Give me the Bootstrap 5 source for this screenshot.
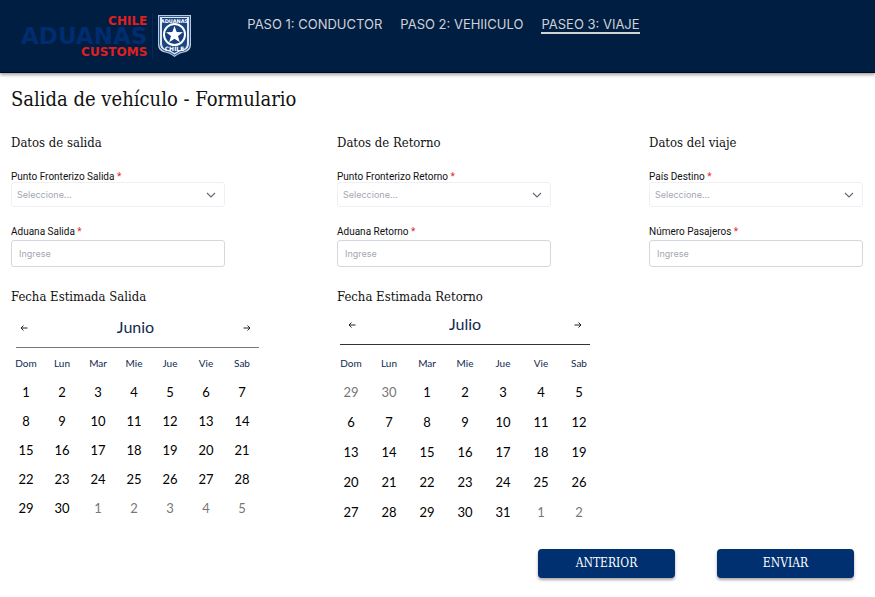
<!DOCTYPE html>
<html lang="es">
<head>
<meta charset="utf-8">
<meta name="viewport" content="width=device-width, initial-scale=1">
<title>Salida de vehículo - Formulario</title>
<link href="https://cdn.jsdelivr.net/npm/bootstrap@5.3.0/dist/css/bootstrap.min.css" rel="stylesheet">
<style>
:root { --navy: #001e42; --brand-blue: #00306f; --brand-red: #e0201f; --slab: "Roboto Slab", "DejaVu Serif Condensed", "DejaVu Serif", serif; }
body { font-family: Inter, sans-serif; color: #111; background: #fff; }
.site-header { background: var(--navy); min-height: 73px; border-bottom: 1px solid #000a1c; box-shadow: 0 2px 3px rgba(0,0,0,.35); padding: 14px 21px 13px; gap: 55px; }
.brand { text-decoration: none; gap: 4px; font-family: "DejaVu Sans", Verdana, sans-serif; font-weight: 700; }
.brand-words { color: var(--brand-red); font-size: 12px; line-height: 14px; padding-right: 5px; border-right: 1px solid #002a63; }
.brand-main { color: #002c70; font-size: 23px; line-height: 17px; }
.steps { gap: 18px; }
.steps .nav-link { color: #d0d2d6; font-size: 13px; line-height: 15px; padding: 3px 0 0; border-bottom: 2px solid transparent; }
.steps .nav-link.active { border-color: #d0d2d6; }
.page-body { padding: 12px 11px 16px; }
.page-title { font-family: var(--slab); font-size: 20px; line-height: 28px; margin: 0 0 20px; }
.form-columns { display: grid; grid-template-columns: 326fr 312fr 215fr; }
.block-title { font-family: var(--slab); font-size: 13px; line-height: 20px; margin: 0 0 18px; }
.field { max-width: 214px; }
.field + .field { margin-top: 19px; }
.field label { display: block; font-family: Roboto, sans-serif; font-size: 10px; line-height: 11px; }
.field + .field label { margin-bottom: 3px; }
.field label span { color: #e02b2b; }
.field .form-select, .field .form-control { font-size: 9px; border-radius: 3px; color: #a3a8b0; }
.field .form-select { height: 25px; padding: 0 28px 0 5px; border-color: #f0f0f2; background-position: right 8px center; background-size: 10px;
  background-image: url("data:image/svg+xml,%3Csvg xmlns='http://www.w3.org/2000/svg' viewBox='0 0 10 10'%3E%3Cpath d='M1 3l4 4 4-4' fill='none' stroke='%23646b7b' stroke-width='1.2'/%3E%3C/svg%3E"); }
.field .form-control { height: 27px; padding: 0 7px; border-color: #d6d7dc; }
.form-control::placeholder { color: #a3a8b0; opacity: 1; }
.dates { font-family: var(--slab); font-size: 13px; line-height: 20px; margin: 20px 0 0; }
.calendar { font-family: Lato, sans-serif; width: 252px; margin-left: -3px; padding-top: 6px; }
.calendar-wide { width: 266px; margin-left: -5px; padding-top: 3px; }
.calendar-head { margin: 0 1px 0 8px; padding: 0 8px 6px 4px; border-bottom: 1px solid #777; }
.calendar-wide .calendar-head { border-color: #333; margin-right: 8px; padding: 0 8px 6px; }
.calendar-head h3 { color: #10294f; font-size: 16px; line-height: 28px; font-weight: 400; margin: 0; }
.calendar-head button { border: 0; background: none; padding: 0; line-height: 8px; }
.calendar table { width: 100%; table-layout: fixed; text-align: center; color: #000; font-size: 13px; }
.calendar td { height: 29px; padding: 0; line-height: 16px; }
.calendar-wide td { height: 30px; }
.calendar th { color: #10294f; height: 29px; padding: 0; font-size: 10px; font-weight: 400; line-height: 12px; }
.calendar-wide th { height: 32px; padding: 4px 0 0; }
.calendar .outside { color: #777; }
.actions { gap: 42px; padding: 22px 10px 0 0; }
.actions .btn { font-family: var(--slab); font-size: 12px; line-height: 17px; color: #fff; background: var(--brand-blue); border: 0; border-radius: 4px; width: 137px; padding: 6px; box-shadow: 0 2px 3px rgba(0,0,0,.35); }
</style>
</head>
<body>
<header class="site-header d-flex align-items-start">
  <a class="brand d-flex align-items-start" href="#">
    <span class="brand-words d-flex flex-column align-items-end"><span>CHILE</span><span class="brand-main">ADUANAS</span><span>CUSTOMS</span></span>
    <svg width="35" height="44" viewBox="0 0 35 44" aria-hidden="true">
      <path d="M1 1h33v30q0 5-5 7-7 1-11.500 5Q13 39 6 38q-5-2-5-7z" fill="#b6c7de"/>
      <path d="M2.500 2.500h30v28q0 4-4.500 6-6 1-10.500 4.500Q13 37.500 7 36.500q-4.500-2-4.500-6z" fill="#dfe8f3" stroke="#2d5790"/>
      <path d="M5 4h25v25q0 4-3 6-6 1-9.500 4Q14 36 8 35q-3-2-3-6z" fill="#1b4684"/>
      <g fill="#fff" font-family="DejaVu Sans, sans-serif" font-weight="700" text-anchor="middle"><text x="17.500" y="9" font-size="5">ADUANAS</text><text x="17.500" y="37" font-size="6">CHILE</text></g>
      <circle cx="17.500" cy="20.500" r="10.500" fill="#153f7a" stroke="#fff" stroke-width="2"/>
      <path d="M17.500 12l2.200 6 6.300.2-5 3.900 1.800 6.100-5.300-3.500-5.300 3.500 1.800-6.100-5-3.900 6.300-.2z" fill="#fff"/>
    </svg>
  </a>
  <nav class="nav steps" aria-label="Pasos">
    <a class="nav-link" href="#">PASO 1: CONDUCTOR</a>
    <a class="nav-link" href="#">PASO 2: VEHIICULO</a>
    <a class="nav-link active" aria-current="step" href="#">PASEO 3: VIAJE</a>
  </nav>
</header>
<main class="page-body">
  <h1 class="page-title">Salida de vehículo - Formulario</h1>
  <form>
    <div class="form-columns">
      <section>
        <h2 class="block-title">Datos de salida</h2>
        <div class="field"><label for="ps">Punto Fronterizo Salida <span>*</span></label><select id="ps" class="form-select"><option>Seleccione...</option></select></div>
        <div class="field"><label for="as">Aduana Salida <span>*</span></label><input id="as" class="form-control" placeholder="Ingrese"></div>
        <h2 class="dates">Fecha Estimada Salida</h2>
        <div class="calendar">
          <div class="calendar-head d-flex justify-content-between align-items-center">
            <button type="button" aria-label="Mes anterior"><svg width="8" height="8" viewBox="0 0 8 8" fill="none" stroke="#222"><path d="M7.500 4H1M3.500 1.500L1 4l2.500 2.500"/></svg></button>
            <h3>Junio</h3>
            <button type="button" aria-label="Mes siguiente"><svg width="8" height="8" viewBox="0 0 8 8" fill="none" stroke="#222"><path d="M.5 4H7M4.500 1.500L7 4 4.500 6.500"/></svg></button>
          </div>
          <table>
            <thead><tr><th>Dom</th><th>Lun</th><th>Mar</th><th>Mie</th><th>Jue</th><th>Vie</th><th>Sab</th></tr></thead>
            <tbody>
              <tr><td>1</td><td>2</td><td>3</td><td>4</td><td>5</td><td>6</td><td>7</td></tr>
              <tr><td>8</td><td>9</td><td>10</td><td>11</td><td>12</td><td>13</td><td>14</td></tr>
              <tr><td>15</td><td>16</td><td>17</td><td>18</td><td>19</td><td>20</td><td>21</td></tr>
              <tr><td>22</td><td>23</td><td>24</td><td>25</td><td>26</td><td>27</td><td>28</td></tr>
              <tr><td>29</td><td>30</td><td class="outside">1</td><td class="outside">2</td><td class="outside">3</td><td class="outside">4</td><td class="outside">5</td></tr>
            </tbody>
          </table>
        </div>
      </section>
      <section>
        <h2 class="block-title">Datos de Retorno</h2>
        <div class="field"><label for="pr">Punto Fronterizo Retorno <span>*</span></label><select id="pr" class="form-select"><option>Seleccione...</option></select></div>
        <div class="field"><label for="ar">Aduana Retorno <span>*</span></label><input id="ar" class="form-control" placeholder="Ingrese"></div>
        <h2 class="dates">Fecha Estimada Retorno</h2>
        <div class="calendar calendar-wide">
          <div class="calendar-head d-flex justify-content-between align-items-center">
            <button type="button" aria-label="Mes anterior"><svg width="8" height="8" viewBox="0 0 8 8" fill="none" stroke="#222"><path d="M7.500 4H1M3.500 1.500L1 4l2.500 2.500"/></svg></button>
            <h3>Julio</h3>
            <button type="button" aria-label="Mes siguiente"><svg width="8" height="8" viewBox="0 0 8 8" fill="none" stroke="#222"><path d="M.5 4H7M4.500 1.500L7 4 4.500 6.500"/></svg></button>
          </div>
          <table>
            <thead><tr><th>Dom</th><th>Lun</th><th>Mar</th><th>Mie</th><th>Jue</th><th>Vie</th><th>Sab</th></tr></thead>
            <tbody>
              <tr><td class="outside">29</td><td class="outside">30</td><td>1</td><td>2</td><td>3</td><td>4</td><td>5</td></tr>
              <tr><td>6</td><td>7</td><td>8</td><td>9</td><td>10</td><td>11</td><td>12</td></tr>
              <tr><td>13</td><td>14</td><td>15</td><td>16</td><td>17</td><td>18</td><td>19</td></tr>
              <tr><td>20</td><td>21</td><td>22</td><td>23</td><td>24</td><td>25</td><td>26</td></tr>
              <tr><td>27</td><td>28</td><td>29</td><td>30</td><td>31</td><td class="outside">1</td><td class="outside">2</td></tr>
            </tbody>
          </table>
        </div>
      </section>
      <section>
        <h2 class="block-title">Datos del viaje</h2>
        <div class="field"><label for="pd">País Destino <span>*</span></label><select id="pd" class="form-select"><option>Seleccione...</option></select></div>
        <div class="field"><label for="np">Número Pasajeros <span>*</span></label><input id="np" class="form-control" placeholder="Ingrese"></div>
      </section>
    </div>
    <div class="actions d-flex justify-content-end">
      <button type="button" class="btn">ANTERIOR</button>
      <button type="submit" class="btn">ENVIAR</button>
    </div>
  </form>
</main>
<script src="https://cdn.jsdelivr.net/npm/bootstrap@5.3.0/dist/js/bootstrap.bundle.min.js"></script>
</body>
</html>
